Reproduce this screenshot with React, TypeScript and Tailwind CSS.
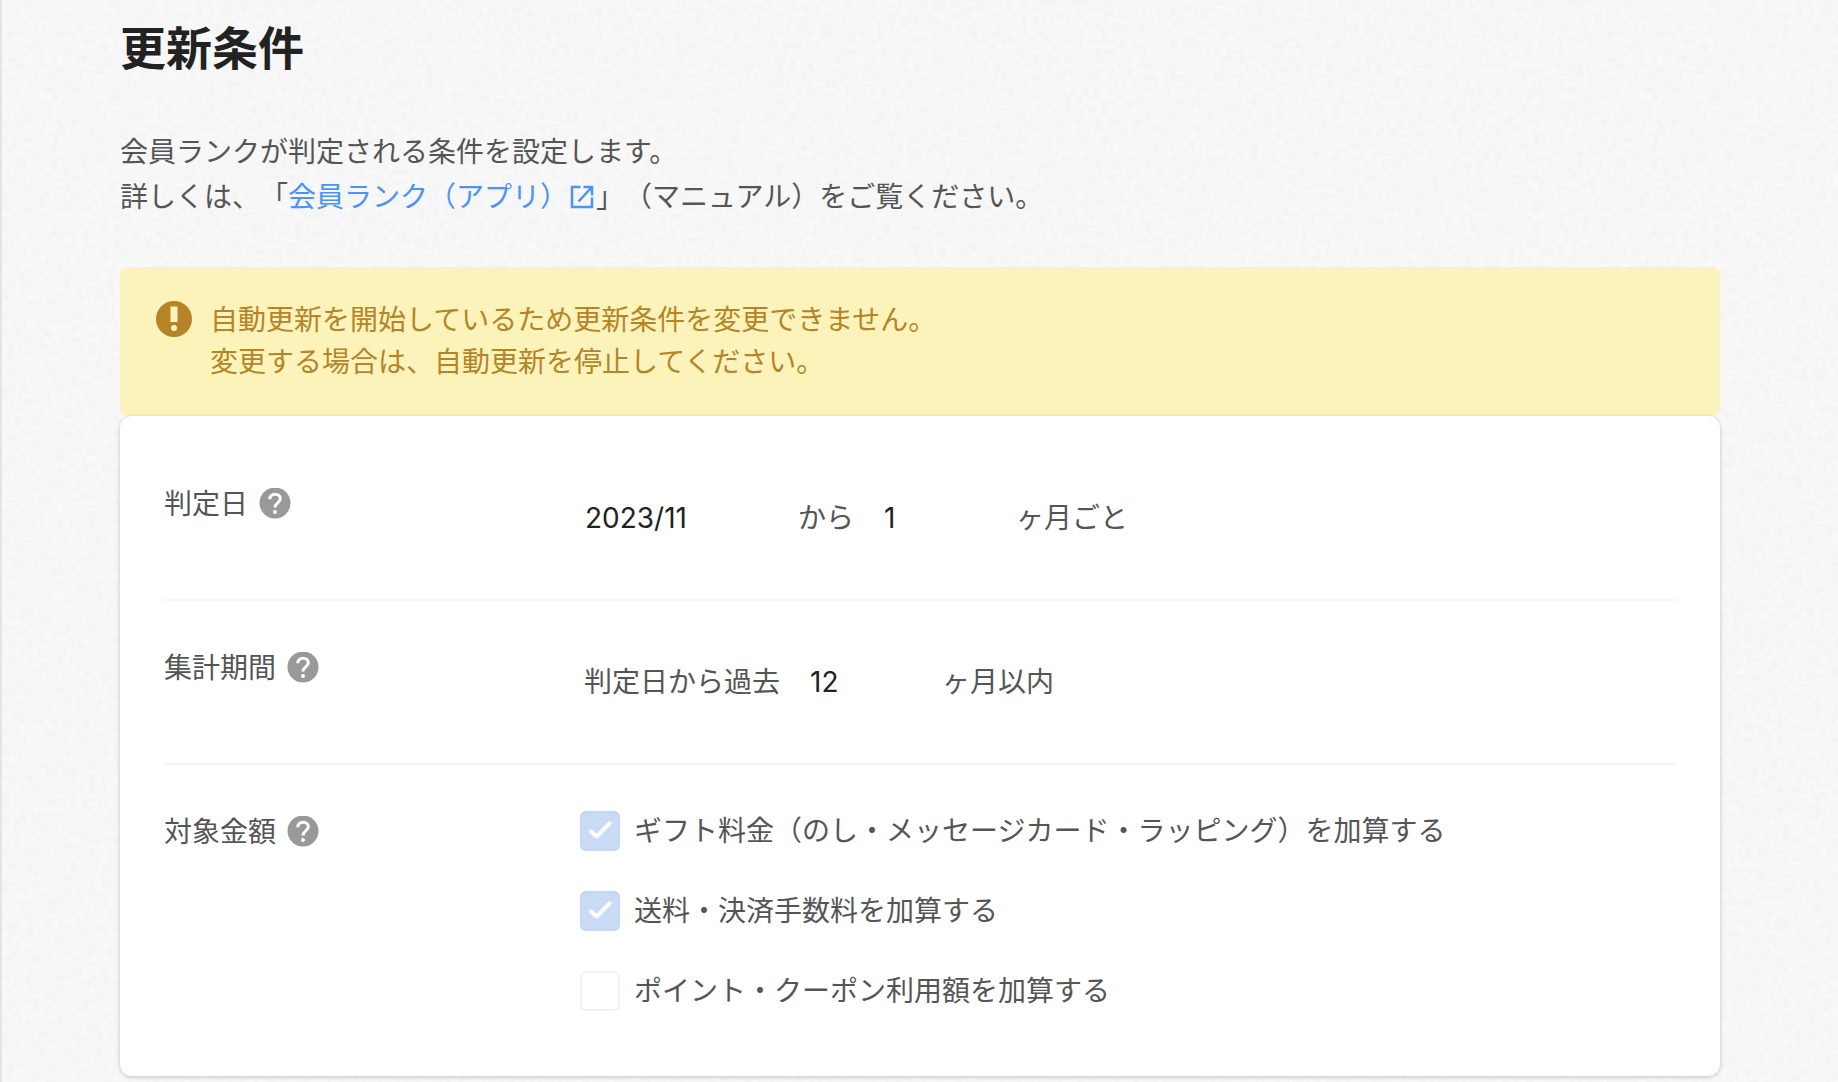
import { useState } from "react";
import type { ReactNode } from "react";

const AMOUNT_OPTIONS = [
  {
    id: "gift",
    label: "ギフト料金（のし・メッセージカード・ラッピング）を加算する",
    checked: true,
  },
  { id: "shipping", label: "送料・決済手数料を加算する", checked: true },
  {
    id: "point",
    label: "ポイント・クーポン利用額を加算する",
    checked: false,
  },
];

function PaperTexture() {
  return (
    <svg
      className="absolute inset-0 -z-10 h-full w-full opacity-10"
      aria-hidden="true"
    >
      <filter id="paper">
        <feTurbulence type="fractalNoise" baseFrequency="0.16" numOctaves="3" />
        <feColorMatrix
          type="matrix"
          values="1 0 0 0 0  1 0 0 0 0  1 0 0 0 0  0 0 0 0 0.5"
        />
      </filter>
      <rect width="100%" height="100%" filter="url(#paper)" />
    </svg>
  );
}

function ExternalIcon() {
  return (
    <svg
      viewBox="0 0 24 24"
      className="mx-0.5 inline-block h-6 w-6 align-[-2px]"
      fill="none"
      stroke="currentColor"
      strokeWidth="2.500"
      aria-hidden="true"
    >
      <path d="M10.500 2H2v20h20v-9.500" />
      <path d="M13.500 2H22v8.500M21.500 2.500 8.500 16.500" />
    </svg>
  );
}

function AlertIcon() {
  return (
    <svg viewBox="0 0 36 36" className="mt-0.5 h-9 w-9 shrink-0" aria-hidden="true">
      <circle cx="18" cy="18" r="18" fill="#b58428" />
      <path d="M14.500 5.500h7v15.500h-7z" fill="#fcf3ba" />
      <circle cx="18" cy="27" r="3" fill="#fcf3ba" />
    </svg>
  );
}

function HelpButton({ label }: { label: string }) {
  return (
    <button type="button" aria-label={`${label}のヘルプ`} className="shrink-0">
      <svg viewBox="0 0 32 32" className="block h-8 w-8">
        <circle cx="16" cy="15" r="15.500" fill="#999" />
        <path
          d="M10.800 11.200C10.800 8 13 6.200 16 6.200s5.300 1.800 5.300 4.600c0 4-5.300 4.300-5.300 8.700"
          fill="none"
          stroke="#fff"
          strokeWidth="3"
        />
        <circle cx="16" cy="24" r="2" fill="#fff" />
      </svg>
    </button>
  );
}

function FormRow({ label, children }: { label: string; children: ReactNode }) {
  return (
    <div className="flex border-b-2 border-[#f5f5f5] last:border-b-0">
      <div className="mt-[46px] flex h-[42px] w-[416px] shrink-0 items-center gap-[11px]">
        <span>{label}</span>
        <HelpButton label={label} />
      </div>
      {children}
    </div>
  );
}

export default function App() {
  const [start, setStart] = useState("2023/11");
  const [interval, setInterval] = useState("1");
  const [period, setPeriod] = useState("12");

  return (
    <main className="relative isolate min-h-screen border-l-2 border-[#e4e4e4] bg-[#fafafa] px-[118px] pt-[14px] font-['Inter','Noto_Sans_CJK_JP',sans-serif] text-[28px] leading-[42px] text-[#555] [text-spacing-trim:space-all]">
      <PaperTexture />
      <h1 className="text-[46px] leading-[68px] font-bold text-[#222]">
        更新条件
      </h1>
      <p className="mt-12 leading-[45px]">
        会員ランクが判定される条件を設定します。
        <br />
        詳しくは、「
        <a href="#manual" className="text-[#4b94f5]">
          会員ランク（アプリ）
          <ExternalIcon />
        </a>
        」（マニュアル）をご覧ください。
      </p>

      <div
        role="alert"
        className="mt-[47px] flex gap-[18px] rounded-lg bg-[#fcf3ba] pt-8 pr-9 pb-[33px] pl-9 text-[#b58428]"
      >
        <AlertIcon />
        <p>
          自動更新を開始しているため更新条件を変更できません。
          <br />
          変更する場合は、自動更新を停止してください。
        </p>
      </div>

      <form className="rounded-xl bg-white px-11 pt-[21px] pb-[65px] shadow-[0_1px_4px_rgba(0,0,0,0.22)]">
        <FormRow label="判定日">
          <div className="flex h-[162px] items-center pl-1">
            <input
              type="text"
              aria-label="開始月"
              disabled
              value={start}
              onChange={(e) => setStart(e.target.value)}
              className="w-[214px] pl-px text-[#222]"
            />
            <span>から</span>
            <input
              id="interval"
              type="text"
              disabled
              value={interval}
              onChange={(e) => setInterval(e.target.value)}
              className="ml-7 w-[106px] pl-0.5 text-[#222]"
            />
            <label htmlFor="interval" className="ml-7">
              ヶ月ごと
            </label>
          </div>
        </FormRow>

        <FormRow label="集計期間">
          <div className="flex h-[162px] items-center pl-1">
            <span>判定日から過去</span>
            <input
              id="period"
              type="text"
              disabled
              value={period}
              onChange={(e) => setPeriod(e.target.value)}
              className="ml-7 w-[106px] pl-0.5 text-[#222]"
            />
            <label htmlFor="period" className="ml-7">
              ヶ月以内
            </label>
          </div>
        </FormRow>

        <FormRow label="対象金額">
          <div className="flex flex-col gap-10 pt-[46px]">
            {AMOUNT_OPTIONS.map(({ id, label, checked }) => (
              <div key={id} className="flex h-10 items-center">
                <span className="grid h-10 w-10 shrink-0">
                  <input
                    id={id}
                    type="checkbox"
                    disabled
                    defaultChecked={checked}
                    className="peer col-start-1 row-start-1 h-10 w-10 appearance-none rounded-md border-2 border-[#f1f1f1] bg-white checked:border-0 checked:bg-[#c9dbf5] checked:shadow-[inset_0_1px_3px_rgba(120,150,200,0.15)]"
                  />
                  <svg
                    viewBox="0 0 40 40"
                    className="pointer-events-none col-start-1 row-start-1 hidden h-10 w-10 peer-checked:block"
                    aria-hidden="true"
                  >
                    <path
                      d="M11 20.500 16.500 25.500 29.500 12.500"
                      fill="none"
                      stroke="#fff"
                      strokeWidth="4"
                      strokeLinecap="round"
                      strokeLinejoin="round"
                    />
                  </svg>
                </span>
                <label htmlFor={id} className="pl-[14px]">
                  {label}
                </label>
              </div>
            ))}
          </div>
        </FormRow>
      </form>
    </main>
  );
}
